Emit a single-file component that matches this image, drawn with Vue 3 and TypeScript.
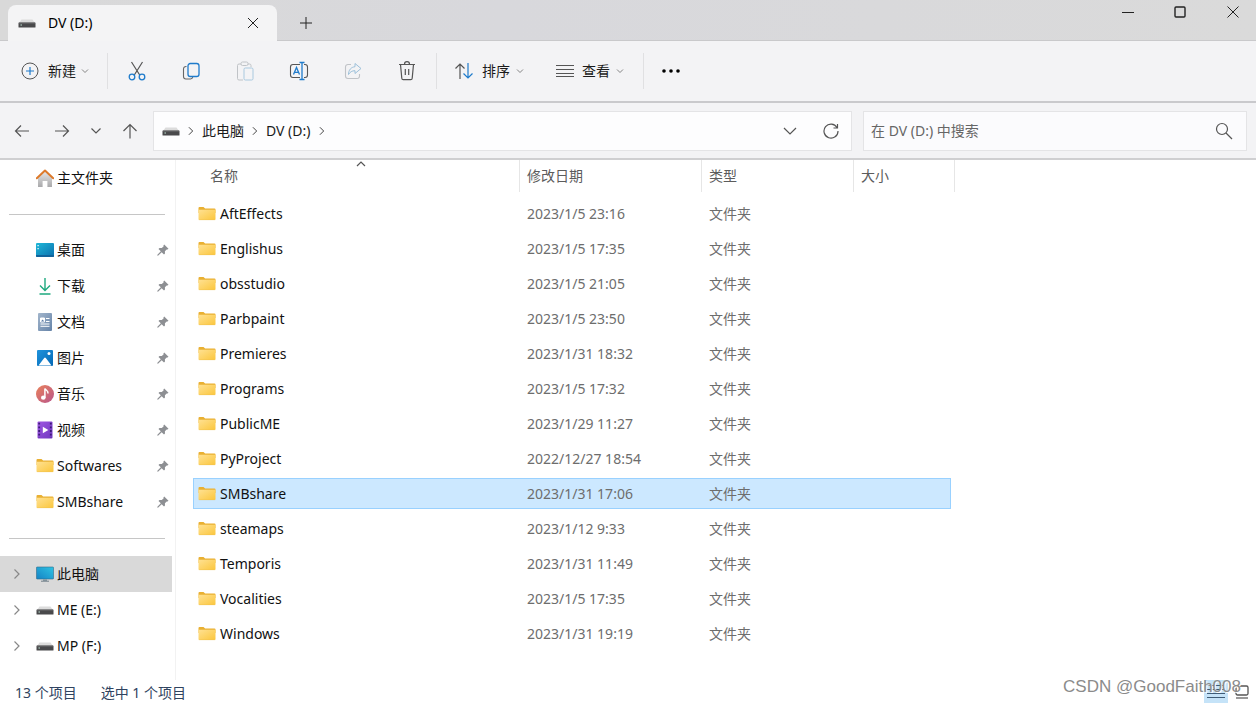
<script setup lang="ts">
import { ref } from 'vue'

interface Entry {
  name: string
  date: string
}

interface Place {
  name: string
  icon: string
}

const places: Place[] = [
  { name: '桌面', icon: 'desktop' },
  { name: '下载', icon: 'download' },
  { name: '文档', icon: 'document' },
  { name: '图片', icon: 'picture' },
  { name: '音乐', icon: 'music' },
  { name: '视频', icon: 'video' },
  { name: 'Softwares', icon: 'folder' },
  { name: 'SMBshare', icon: 'folder' },
]

const devices: Place[] = [
  { name: '此电脑', icon: 'computer' },
  { name: 'ME (E:)', icon: 'drive' },
  { name: 'MP (F:)', icon: 'drive' },
]

const entries: Entry[] = [
  { name: 'AftEffects', date: '2023/1/5 23:16' },
  { name: 'Englishus', date: '2023/1/5 17:35' },
  { name: 'obsstudio', date: '2023/1/5 21:05' },
  { name: 'Parbpaint', date: '2023/1/5 23:50' },
  { name: 'Premieres', date: '2023/1/31 18:32' },
  { name: 'Programs', date: '2023/1/5 17:32' },
  { name: 'PublicME', date: '2023/1/29 11:27' },
  { name: 'PyProject', date: '2022/12/27 18:54' },
  { name: 'SMBshare', date: '2023/1/31 17:06' },
  { name: 'steamaps', date: '2023/1/12 9:33' },
  { name: 'Temporis', date: '2023/1/31 11:49' },
  { name: 'Vocalities', date: '2023/1/5 17:35' },
  { name: 'Windows', date: '2023/1/31 19:19' },
]

const selected = ref('SMBshare')
const query = ref('')
</script>

<template>
  <div class="explorer">
    <svg class="defs" width="0" height="0" aria-hidden="true">
      <defs>
        <linearGradient id="g-folder" x1="0" y1="0" x2="1" y2="1">
          <stop offset="0" stop-color="#ffe192" /><stop offset="1" stop-color="#fbc63c" />
        </linearGradient>
        <linearGradient id="g-desktop" x1="0" y1="0" x2="1" y2="1">
          <stop offset="0" stop-color="#1fb8d8" /><stop offset="1" stop-color="#0b6fae" />
        </linearGradient>
        <linearGradient id="g-screen" x1="0" y1="1" x2="1" y2="0">
          <stop offset="0" stop-color="#1583c5" /><stop offset="1" stop-color="#2fc3e3" />
        </linearGradient>
        <linearGradient id="g-doc" x1="0" y1="0" x2="1" y2="1">
          <stop offset="0" stop-color="#a3b6cc" /><stop offset="1" stop-color="#6583a8" />
        </linearGradient>
        <linearGradient id="g-pic" x1="0" y1="0" x2="1" y2="1">
          <stop offset="0" stop-color="#1f93dc" /><stop offset="1" stop-color="#0468b5" />
        </linearGradient>
        <linearGradient id="g-music" x1="0" y1="0" x2="1" y2="1">
          <stop offset="0" stop-color="#e9815a" /><stop offset="1" stop-color="#b9568c" />
        </linearGradient>
        <linearGradient id="g-video" x1="0" y1="0" x2="1" y2="1">
          <stop offset="0" stop-color="#a057e3" /><stop offset="1" stop-color="#7038bf" />
        </linearGradient>
        <linearGradient id="g-wall" x1="0" y1="0" x2="0" y2="1">
          <stop offset="0" stop-color="#e8e8e8" /><stop offset="1" stop-color="#a9a9ab" />
        </linearGradient>
      </defs>
      <symbol id="i-folder" viewBox="0 0 18 18">
        <path d="M.5 3a1 1 0 0 1 1-1h4l1.600 1.600h9.400a1 1 0 0 1 1 1V8H.5z" fill="#e9b032" />
        <path d="M.5 4.800h17V14a1 1 0 0 1-1 1h-15a1 1 0 0 1-1-1z" fill="url(#g-folder)" />
        <path d="M.8 14.700h16.400" stroke="#f0c050" stroke-width=".5" />
      </symbol>
      <symbol id="i-desktop" viewBox="0 0 18 18">
        <rect y="2" width="18" height="14" rx="1" fill="url(#g-desktop)" />
        <path d="M0 14h18v1a1 1 0 0 1-1 1H1a1 1 0 0 1-1-1z" fill="#11639b" />
        <path d="M1.500 4h1.200v1.200H1.500zM1.500 7h1.200v1.200H1.500z" fill="#fff" />
      </symbol>
      <symbol id="i-download" viewBox="0 0 18 18">
        <path d="M9 1v12M4 8.500l5 5 5-5M3.500 17h11" fill="none" stroke="#1ea97f" stroke-width="1.400" />
      </symbol>
      <symbol id="i-document" viewBox="0 0 18 18">
        <rect x="2" width="14" height="18" rx="1" fill="url(#g-doc)" />
        <path d="M4.500 5h4v4h-4zM10 5.500h3.500M10 8.500h3.500M4.500 11h9M4.500 13.300h9" fill="#fff" stroke="#fff" stroke-width="1" />
        <path d="M5 8.500l1.600-2 1.700 2z" fill="#5c7ca6" />
      </symbol>
      <symbol id="i-picture" viewBox="0 0 18 18">
        <rect x="1" y="1" width="16" height="16" rx="1" fill="url(#g-pic)" />
        <circle cx="13" cy="4.500" r="1.500" fill="#fff" />
        <path d="M2.500 16.500L8.200 9a1 1 0 0 1 1.600 0l5.700 7.500z" fill="#fff" />
      </symbol>
      <symbol id="i-music" viewBox="0 0 18 18">
        <circle cx="9" cy="9" r="9" fill="url(#g-music)" />
        <ellipse cx="7.300" cy="12.700" rx="2.300" ry="2.100" fill="#fff" />
        <path d="M8.900 12.800V3.600c.7 1.600 3.600 1.900 3.100 4.900" fill="none" stroke="#fff" stroke-width="1.500" />
      </symbol>
      <symbol id="i-video" viewBox="0 0 18 18">
        <rect x="1.500" y=".5" width="15" height="17" rx="1" fill="url(#g-video)" />
        <path d="M3.200 1.700v15M14.800 1.700v15" stroke="#3c1b78" stroke-width="1.800" stroke-dasharray="1.800 1.900" />
        <path d="M6.800 5.700l5.500 3.300-5.500 3.300z" fill="#fff" />
      </symbol>
      <symbol id="i-computer" viewBox="0 0 18 18">
        <rect x=".5" y="2" width="17" height="12" rx=".6" fill="url(#g-screen)" stroke="#316b8b" stroke-width=".6" />
        <path d="M7 14.300h4V16H7z" fill="#8997a0" /><path d="M5 16.200h8" stroke="#71808a" stroke-width="1" />
      </symbol>
      <symbol id="i-drive" viewBox="0 0 18 18">
        <path d="M3.500 5.500h11L17 9H1z" fill="#dcdcdc" />
        <rect x=".5" y="8.500" width="17" height="5" rx=".5" fill="#49494b" />
        <path d="M1 9h16" stroke="#777" stroke-width=".8" /><path d="M2.500 11h1.400" stroke="#c7eedb" stroke-width="1.100" />
      </symbol>
      <symbol id="i-home" viewBox="0 0 18 18">
        <path d="M2 8l7-6 7 6v10h-4.600v-6H6.600v6H2z" fill="url(#g-wall)" />
        <path d="M.8 9.300L9 1.600l8.200 7.700" fill="none" stroke="#dd7a2b" stroke-width="2" stroke-linecap="round" stroke-linejoin="round" />
      </symbol>
      <symbol id="i-pin" viewBox="0 0 12 12">
        <path d="M7.200.5l4.300 4.300-1 .8-.8-.2-1.800 1.900.1 2.300-1 1L4.700 8.300 1 11.700l-.7-.1.1-.8 3.400-3.600L1.500 4.900l1-1 2.300.2 1.900-1.900-.3-.8z" fill="#8d8f93" />
      </symbol>
      <symbol id="i-down" viewBox="0 0 8 8"><path d="M1 2.500l3 3 3-3" fill="none" stroke="currentColor" stroke-width=".9" /></symbol>
      <symbol id="i-right" viewBox="0 0 8 12"><path d="M1.500 1.500L6 6l-4.500 4.500" fill="none" stroke="currentColor" stroke-width="1.200" /></symbol>
    </svg>

    <header class="titlebar">
      <div class="tab">
        <svg class="icon"><use href="#i-drive" /></svg>
        <span class="tab-title">DV (D:)</span>
        <button class="plain tab-close" aria-label="关闭标签页">
          <svg width="12" height="12" viewBox="0 0 12 12"><path d="M1 1l10 10M11 1L1 11" class="line" /></svg>
        </button>
      </div>
      <button class="plain new-tab" aria-label="新标签页">
        <svg width="12" height="12" viewBox="0 0 12 12"><path d="M6 0v12M0 6h12" class="line" /></svg>
      </button>
      <div class="window-buttons">
        <button class="plain" aria-label="最小化"><svg width="12" height="12" viewBox="0 0 12 12"><path d="M0 6.500h12" class="line" /></svg></button>
        <button class="plain" aria-label="最大化"><svg width="12" height="12" viewBox="0 0 12 12"><rect x="1" y="1" width="10" height="10" rx="1" class="line bold" /></svg></button>
        <button class="plain" aria-label="关闭"><svg width="12" height="12" viewBox="0 0 12 12"><path d="M.5.5l11 11M11.500.5l-11 11" class="line" /></svg></button>
      </div>
    </header>

    <div class="toolbar">
      <button class="plain labelled create">
        <svg width="18" height="18" viewBox="0 0 18 18" fill="none"><circle cx="9" cy="9" r="8" stroke="#555" /><path d="M9 5v8M5 9h8" stroke="#1f7bcb" stroke-width="1.200" /></svg>
        <span>新建</span>
        <svg class="caret"><use href="#i-down" /></svg>
      </button>
      <span class="rule"></span>
      <div class="actions">
        <button class="plain" aria-label="剪切">
          <svg width="18" height="20" viewBox="0 0 18 20" fill="none"><path d="M3.500 1l8.200 13M14.500 1L6.300 14" stroke="#555" stroke-width="1.200" /><circle cx="4" cy="16" r="2.800" stroke="#1f7bcb" stroke-width="1.300" /><circle cx="14" cy="16" r="2.800" stroke="#1f7bcb" stroke-width="1.300" /></svg>
        </button>
        <button class="plain" aria-label="复制">
          <svg width="18" height="18" viewBox="0 0 18 18" fill="none"><path d="M4.500 4.500H4A2.500 2.500 0 0 0 1.500 7v7.500A2.500 2.500 0 0 0 4 17h4.500a2.500 2.500 0 0 0 2.300-2" stroke="#666" stroke-width="1.100" /><rect x="6" y="1.500" width="11" height="13" rx="2.300" stroke="#1f7bcb" stroke-width="1.300" /></svg>
        </button>
        <button class="plain" aria-label="粘贴" disabled>
          <svg width="18" height="20" viewBox="0 0 18 20" fill="none"><path d="M5 3H3A1.500 1.500 0 0 0 1.500 4.500v13A1.500 1.500 0 0 0 3 19h4M12 3h1.500A1.500 1.500 0 0 1 15 4.500V6" stroke="#c0c3c7" /><rect x="5" y="1" width="7" height="3.500" rx="1.500" stroke="#c0c3c7" /><rect x="8" y="7" width="9" height="12" rx="1.300" stroke="#a9c9df" /></svg>
        </button>
        <button class="plain" aria-label="重命名">
          <svg width="20" height="20" viewBox="0 0 20 20" fill="none"><path d="M11 3.500H4A2.500 2.500 0 0 0 1.500 6v8A2.500 2.500 0 0 0 4 16.500h7M15 3.500h1A2.500 2.500 0 0 1 18.500 6v8a2.500 2.500 0 0 1-2.500 2.500h-1" stroke="#555" stroke-width="1.100" /><path d="M13 1.500v17M10.500 1.500h5M10.500 18.500h5M4.500 13.500L7.500 6.500l3 7M5.500 11.300h4" stroke="#1f7bcb" stroke-width="1.300" /></svg>
        </button>
        <button class="plain" aria-label="共享" disabled>
          <svg width="18" height="18" viewBox="0 0 18 18" fill="none"><path d="M7 2.500H4A2.500 2.500 0 0 0 1.500 5v9A2.500 2.500 0 0 0 4 16.500h9a2.500 2.500 0 0 0 2.500-2.500v-2" stroke="#c0c3c7" stroke-width="1.100" /><path d="M11 1.500L17 6.500l-6 5V8.700C8 8.700 6 10 4.500 12.500c0-4.500 2.500-7.300 6.500-7.800z" stroke="#9cc0da" stroke-linejoin="round" /></svg>
        </button>
        <button class="plain" aria-label="删除">
          <svg width="18" height="20" viewBox="0 0 18 20" fill="none" stroke="#555" stroke-width="1.200"><path d="M1 3.500h16M2.500 3.500l1.300 13.800A1.500 1.500 0 0 0 5.300 18.700h7.400a1.500 1.500 0 0 0 1.500-1.400l1.300-13.800M6.500 3.200a2.500 2.500 0 0 1 5 0M7.300 8v6M10.700 8v6" /></svg>
        </button>
      </div>
      <span class="rule"></span>
      <button class="plain labelled sort">
        <svg width="20" height="18" viewBox="0 0 20 18" fill="none" stroke-width="1.200"><path d="M6 17V2M1.500 6.500L6 2l4.500 4.500" stroke="#555" /><path d="M14 1v15M9.500 11.500L14 16l4.500-4.500" stroke="#1f7bcb" /></svg>
        <span>排序</span>
        <svg class="caret"><use href="#i-down" /></svg>
      </button>
      <button class="plain labelled view">
        <svg width="18" height="14" viewBox="0 0 18 14"><path d="M0 1.500h18M0 5.500h18M0 9.500h18M0 12.500h18" stroke="#555" /></svg>
        <span>查看</span>
        <svg class="caret"><use href="#i-down" /></svg>
      </button>
      <span class="rule"></span>
      <button class="plain more" aria-label="更多">
        <svg width="18" height="4" viewBox="0 0 18 4"><circle cx="2" cy="2" r="1.800" /><circle cx="9" cy="2" r="1.800" /><circle cx="16" cy="2" r="1.800" /></svg>
      </button>
    </div>

    <div class="addressbar">
      <nav class="history" aria-label="导航">
        <button class="plain" aria-label="后退"><svg width="16" height="14" viewBox="0 0 16 14"><path d="M15 7H1.500M7 1.500L1.500 7 7 12.500" class="line" /></svg></button>
        <button class="plain" aria-label="前进"><svg width="16" height="14" viewBox="0 0 16 14"><path d="M1 7h13.500M9 1.500L14.500 7 9 12.500" class="line" /></svg></button>
        <button class="plain narrow" aria-label="最近的位置"><svg width="12" height="8" viewBox="0 0 12 8"><path d="M1.500 1.500L6 6l4.500-4.500" class="line" /></svg></button>
        <button class="plain" aria-label="向上"><svg width="16" height="16" viewBox="0 0 16 16"><path d="M8 15.500v-14M1.500 8L8 1.500 14.500 8" class="line" /></svg></button>
      </nav>
      <div class="path">
        <svg class="icon"><use href="#i-drive" /></svg>
        <svg class="crumb-sep"><use href="#i-right" /></svg>
        <a href="#computer">此电脑</a>
        <svg class="crumb-sep"><use href="#i-right" /></svg>
        <a href="#d">DV (D:)</a>
        <svg class="crumb-sep"><use href="#i-right" /></svg>
        <div class="path-tools">
          <button class="plain" aria-label="历史地址"><svg width="14" height="8" viewBox="0 0 14 8"><path d="M1 1l6 6 6-6" class="line" /></svg></button>
          <button class="plain" aria-label="刷新"><svg width="16" height="16" viewBox="0 0 16 16"><path d="M14 4.500A7 7 0 1 0 15 8M14.500 1v4h-4" class="line" /></svg></button>
        </div>
      </div>
      <label class="search">
        <input v-model="query" type="text" placeholder="在 DV (D:) 中搜索" aria-label="在 DV (D:) 中搜索" />
        <svg width="18" height="18" viewBox="0 0 18 18"><circle cx="7" cy="7" r="5.500" class="line" /><path d="M11 11l6 6" class="line" /></svg>
      </label>
    </div>

    <main class="body">
      <aside class="sidebar">
        <a class="place" href="#home"><svg class="icon"><use href="#i-home" /></svg><span>主文件夹</span></a>
        <hr />
        <a v-for="p in places" :key="p.name" class="place" :href="'#' + p.name">
          <svg class="icon"><use :href="'#i-' + p.icon" /></svg>
          <span>{{ p.name }}</span>
          <svg class="pin"><use href="#i-pin" /></svg>
        </a>
        <hr />
        <a v-for="(d, i) in devices" :key="d.name" class="place device" :class="{ current: i === 0 }" :href="'#' + d.name">
          <svg class="expand"><use href="#i-right" /></svg>
          <svg class="icon"><use :href="'#i-' + d.icon" /></svg>
          <span>{{ d.name }}</span>
        </a>
      </aside>

      <section class="files">
        <table>
          <colgroup><col class="c-name" /><col class="c-date" /><col class="c-type" /><col class="c-size" /></colgroup>
          <thead>
            <tr>
              <th scope="col">
                <div class="head head-name">名称
                  <svg class="sorted" width="10" height="6" viewBox="0 0 10 6"><path d="M1 5l4-4 4 4" class="line" /></svg>
                </div>
              </th>
              <th scope="col"><div class="head">修改日期</div></th>
              <th scope="col"><div class="head">类型</div></th>
              <th scope="col"><div class="head">大小</div></th>
            </tr>
          </thead>
          <tbody>
            <tr v-for="e in entries" :key="e.name" :class="{ selected: e.name === selected }" @click="selected = e.name">
              <td><div class="cell name"><svg class="icon"><use href="#i-folder" /></svg>{{ e.name }}</div></td>
              <td><div class="cell">{{ e.date }}</div></td>
              <td><div class="cell">文件夹</div></td>
              <td><div class="cell last"></div></td>
            </tr>
          </tbody>
        </table>
      </section>
    </main>

    <footer class="status">
      <span>{{ entries.length }} 个项目</span>
      <span>选中 1 个项目</span>
      <div class="modes">
        <button class="plain active" aria-label="详细信息"><svg width="18" height="14" viewBox="0 0 18 14"><path d="M0 .5h18M0 4.500h18M0 8.500h18M0 12.500h18" stroke="#3f5c77" stroke-width="1.200" /></svg></button>
        <button class="plain" aria-label="大图标"><svg width="14" height="14" viewBox="0 0 14 14"><rect x="1" y="1" width="12" height="9" rx="1.500" fill="none" stroke="#555" stroke-width="1.300" /><path d="M1 13h12" stroke="#555" stroke-width="1.200" /></svg></button>
      </div>
    </footer>
    <div class="watermark">CSDN @GoodFaith008</div>
  </div>
</template>

<style>
body {
  margin: 0;
  background: #fff;
}
</style>

<style scoped>
.explorer {
  position: relative;
  display: flex;
  flex-direction: column;
  min-height: 100vh;
  font: 14px/20px "Noto Sans", "Noto Sans CJK SC", sans-serif;
  color: #1b1b1b;
  background: #fff;
}
.explorer * {
  box-sizing: border-box;
}
.defs {
  position: absolute;
}
svg {
  display: block;
  flex: none;
}
a {
  color: inherit;
  text-decoration: none;
}
.plain {
  display: flex;
  align-items: center;
  justify-content: center;
  padding: 0;
  border: 0;
  background: none;
  color: inherit;
  font: inherit;
  white-space: nowrap;
}
.line {
  fill: none;
  stroke: #555;
  stroke-width: 1.2;
}
.icon {
  width: 18px;
  height: 18px;
}

.titlebar {
  display: flex;
  height: 41px;
  padding-left: 8px;
  background: linear-gradient(90deg, #d9d9d9, #d8d8dc 40%, #dadada);
  box-shadow: inset 0 -1px #c9c9cb;
}
.titlebar .line {
  stroke: #222;
  stroke-width: 1;
}
.titlebar .bold {
  stroke-width: 1.4;
}
.tab {
  display: flex;
  align-items: center;
  width: 269px;
  margin-top: 5px;
  padding: 0 18px 0 10px;
  border-radius: 8px 8px 0 0;
  background: #f4f4f5;
}
.tab-title {
  margin-left: 12px;
  color: #000;
}
.tab-close {
  margin-left: auto;
}
.new-tab {
  width: 58px;
  padding-top: 4px;
}
.window-buttons {
  display: flex;
  height: 24px;
  margin-left: auto;
}
.window-buttons .plain {
  width: 52px;
}
.window-buttons .plain:last-child {
  width: 50px;
  padding-left: 4px;
}

.toolbar {
  display: flex;
  align-items: center;
  height: 62px;
  padding-left: 21px;
  border-bottom: 2px solid #c9c9cc;
  background: #f3f3f5;
}
.labelled {
  gap: 8px;
}
.caret {
  width: 8px;
  height: 8px;
  color: #777;
  margin-left: -2px;
}
.create {
  gap: 9px;
  margin-right: 18px;
}
.create .caret {
  margin-left: -4px;
}
.rule {
  width: 1px;
  height: 36px;
  background: #e0e0e2;
}
.actions {
  display: flex;
  padding: 0 2px;
}
.actions .plain {
  width: 54px;
  height: 36px;
}
.sort {
  margin-left: 17px;
}
.view {
  margin: 0 19px 0 32px;
}
.more {
  width: 54px;
  height: 36px;
}

.addressbar {
  display: flex;
  align-items: center;
  height: 57px;
  padding: 0 9px 0 2px;
  border-bottom: 2px solid #cfcfd1;
  background: #f3f3f5;
}
.history {
  display: flex;
  width: 151px;
}
.history .plain {
  width: 40px;
  height: 32px;
}
.history .narrow {
  width: 28px;
}
.path,
.search {
  display: flex;
  align-items: center;
  height: 40px;
  border: 1px solid #e4e4e6;
  background: #fdfdfe;
}
.path {
  flex: 1;
  padding-left: 8px;
}
.crumb-sep {
  width: 8px;
  height: 10px;
  margin: 0 7px;
  color: #444;
}
.path-tools {
  display: flex;
  margin-left: auto;
}
.path-tools .plain {
  width: 41px;
  height: 32px;
}
.search {
  flex: 0 1 384px;
  margin-left: 11px;
  padding: 0 13px 0 7px;
  background: #fbfbfd;
}
.search input {
  flex: 1;
  min-width: 0;
  padding: 0;
  border: 0;
  outline: 0;
  background: none;
  font: inherit;
}
.search input::placeholder {
  color: #666;
  opacity: 1;
}

.body {
  display: flex;
  flex: 1;
}
.sidebar {
  width: 176px;
  padding-right: 3px;
  border-right: 1px solid #f2f2f2;
}
.place {
  display: flex;
  align-items: center;
  height: 36px;
  padding: 0 3px 0 36px;
}
.place span {
  margin-left: 3px;
  color: #111;
}
.place.device {
  padding-left: 13px;
}
.expand {
  width: 8px;
  height: 12px;
  margin-right: 15px;
  color: #888;
}
.current {
  background: #d9d9d9;
}
.pin {
  width: 12px;
  height: 12px;
  margin-left: auto;
}
hr {
  height: 1px;
  margin: 18px 7px 17px 9px;
  border: 0;
  background: #c6c6c6;
}

.files {
  flex: 1;
  padding-left: 17px;
}
table {
  table-layout: fixed;
  width: 762px;
  border-collapse: collapse;
}
.c-name {
  width: 327px;
}
.c-date {
  width: 182px;
}
.c-type {
  width: 152px;
}
.c-size {
  width: 101px;
}
th,
td {
  padding: 0;
  font-weight: 400;
  text-align: left;
}
.head {
  height: 32px;
  margin-bottom: 4px;
  padding: 6px 0 0 7px;
  border-right: 1px solid #e6e6e6;
  color: #5c5c5c;
}
.head-name {
  position: relative;
  padding-left: 17px;
}
.sorted {
  position: absolute;
  top: 1px;
  left: 50%;
}
.cell {
  display: flex;
  align-items: center;
  height: 31px;
  margin: 2px 0;
  padding-left: 7px;
  border: solid transparent;
  border-width: 1px 0;
  color: #6d6d6d;
}
.name {
  gap: 4px;
  padding-left: 4px;
  border-left-width: 1px;
  color: #111;
}
.last {
  margin-right: 4px;
  border-right-width: 1px;
}
.selected .cell {
  border-color: #99d1ff;
  background: #cce8ff;
}

.status {
  display: flex;
  align-items: center;
  gap: 24px;
  height: 23px;
  padding-left: 15px;
  color: #2f4360;
}
.status span {
  padding-top: 2px;
}
.modes {
  display: flex;
  margin-left: auto;
}
.modes .plain {
  width: 28px;
  height: 23px;
}
.modes .active {
  width: 24px;
  background: #c5e3f8;
}
.watermark {
  position: absolute;
  right: 15px;
  bottom: 6px;
  font: 17px/20px "Liberation Sans", sans-serif;
  color: #8b8b8b;
  text-shadow: 1px 1px #fff;
  pointer-events: none;
}
</style>
